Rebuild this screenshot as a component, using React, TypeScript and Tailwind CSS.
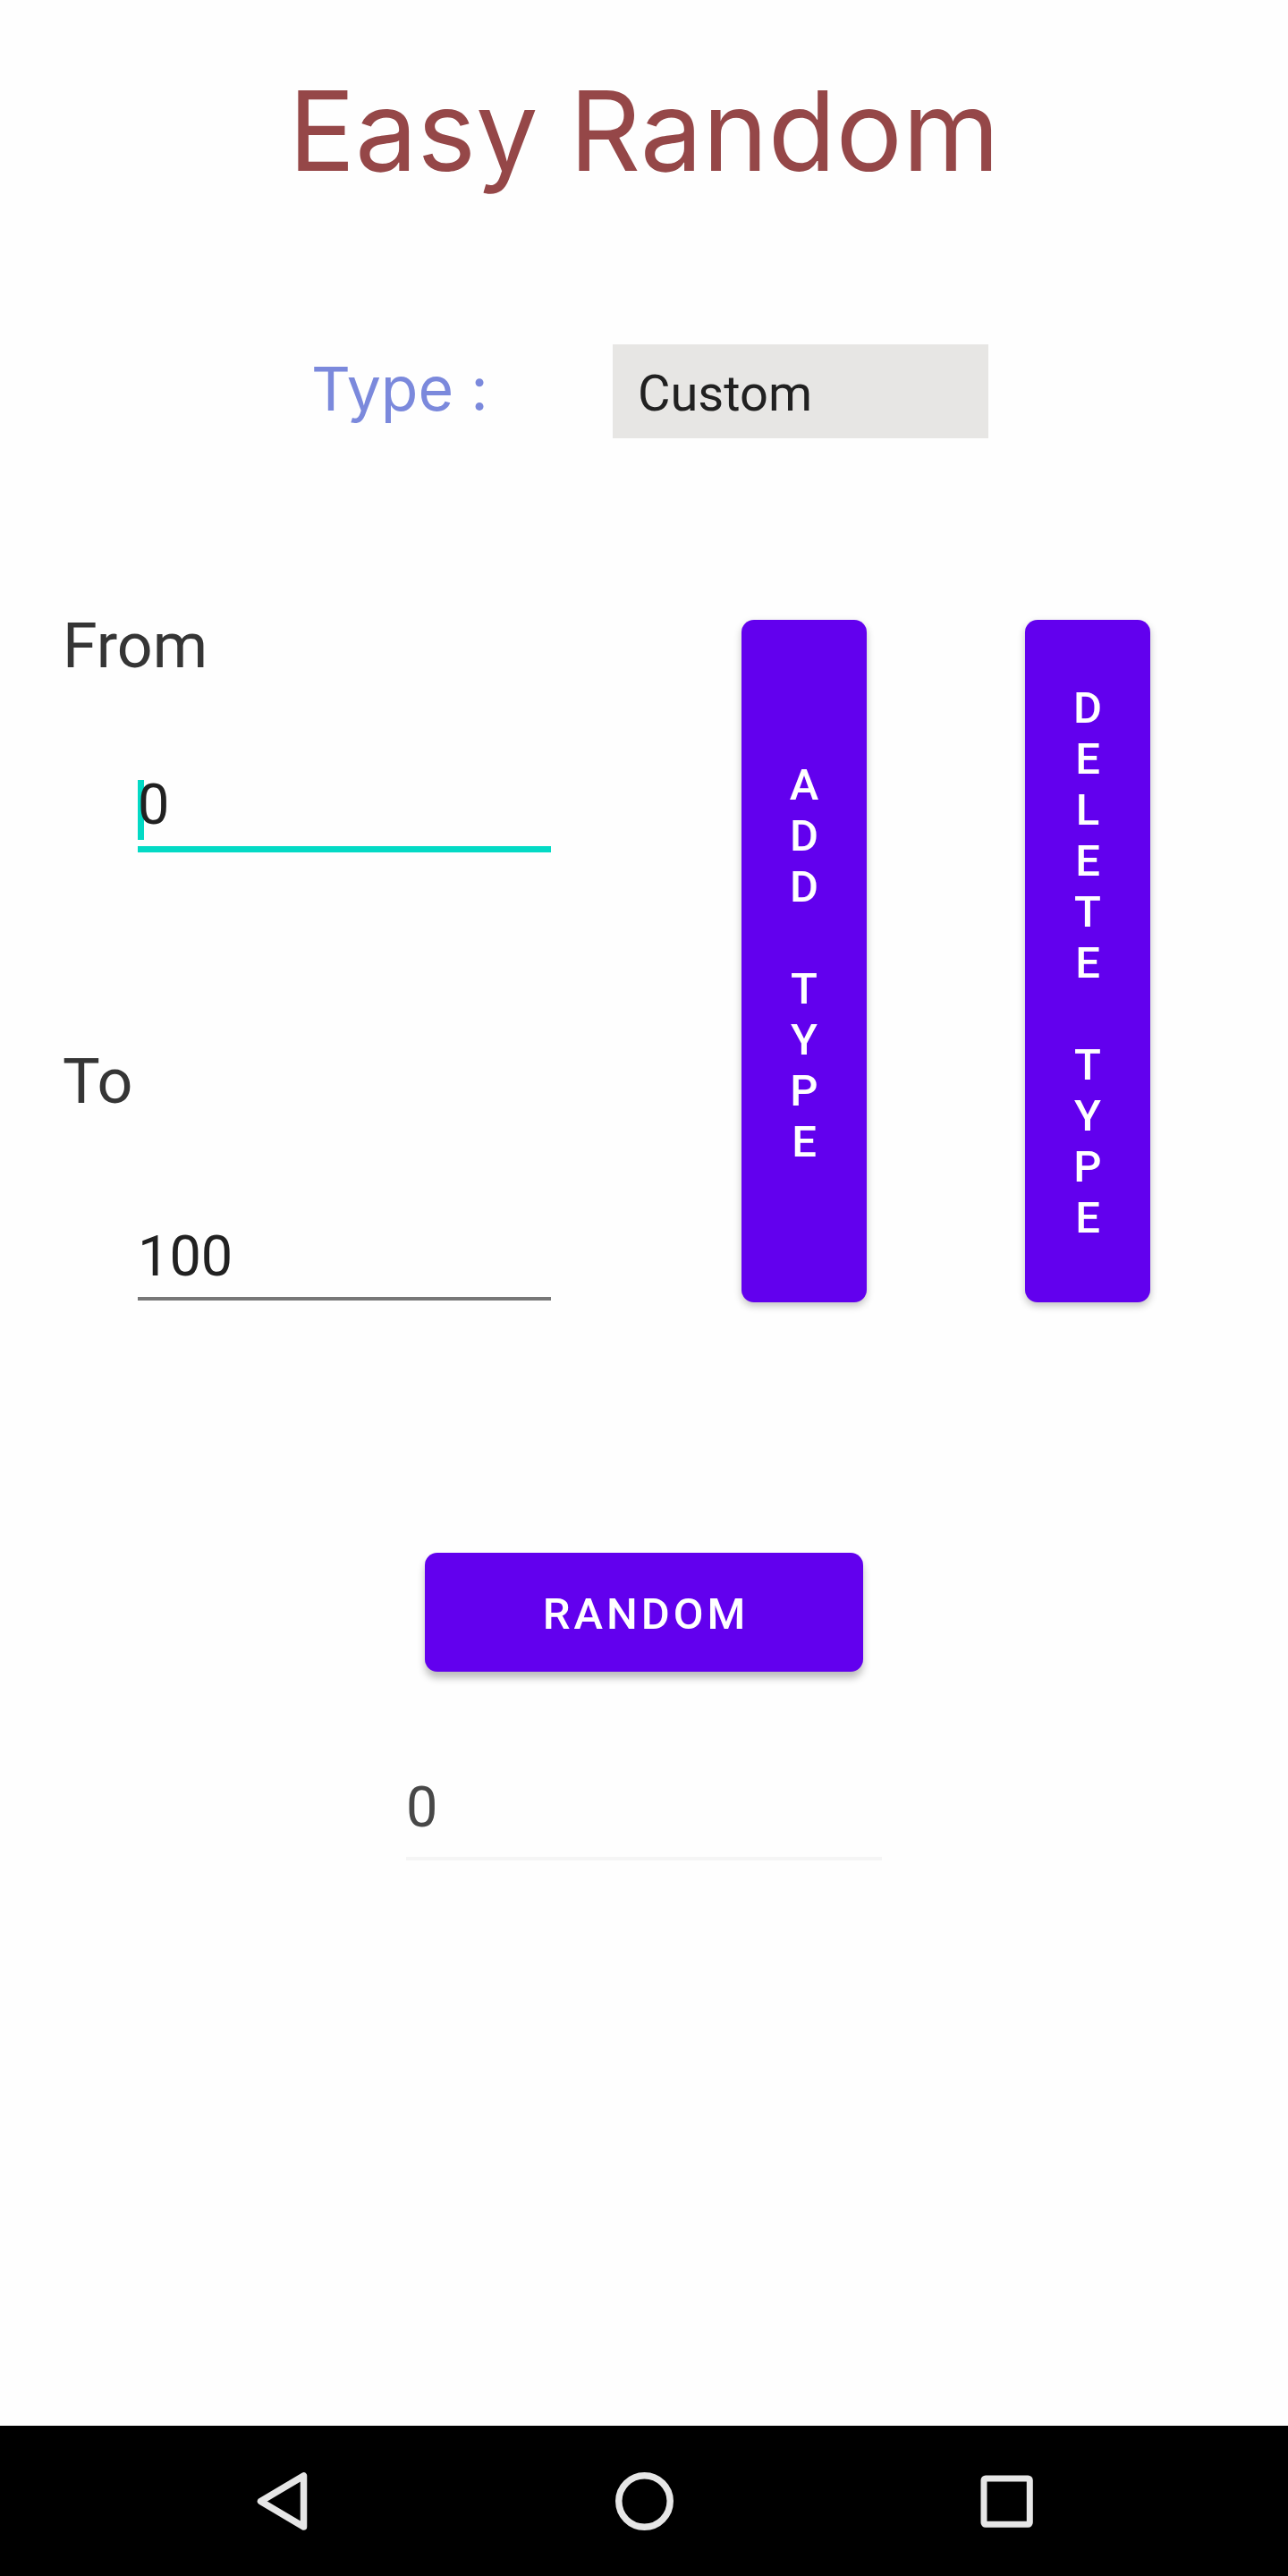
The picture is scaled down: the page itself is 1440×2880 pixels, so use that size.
import { useState } from "react";

const stackedLabel = (text: string) =>
  text.split("").map((letter, index) => (
    <span key={index} className="block h-[57px]">
      {letter}
    </span>
  ));

function StackedButton({ label }: { label: string }) {
  return (
    <button
      type="button"
      aria-label={label}
      className="flex w-[140px] flex-col items-center justify-center rounded-[14px] bg-[#6200ee] pt-1 text-[49px] leading-[57px] font-medium text-white uppercase shadow-[0_4px_8px_rgba(0,0,0,0.24)]"
    >
      {stackedLabel(label)}
    </button>
  );
}

export default function App() {
  const [from, setFrom] = useState("0");
  const [to, setTo] = useState("100");
  const [result, setResult] = useState("0");

  const roll = () => {
    const low = Number(from);
    const high = Number(to);
    setResult(String(low + Math.floor(Math.random() * (high - low + 1))));
  };

  return (
    <div className="flex min-h-screen flex-col bg-[#fefefe] font-['Roboto',sans-serif] text-[#212121]">
      <main className="flex flex-1 flex-col">
        <h1 className="mt-[74px] text-center font-['Inter',sans-serif] text-[124px] leading-[144px] text-[#954748]">
          Easy Random
        </h1>

        <div className="mt-[167px] ml-[348px] flex h-[105px] items-center">
          <label
            htmlFor="type"
            className="w-[337px] pb-2 font-['Inter',sans-serif] text-[68px] leading-[84px] text-[#7b89dc]"
          >
            Type :
          </label>
          <select
            id="type"
            className="h-full w-[420px] appearance-none bg-[#e7e6e4] px-7 pt-1 text-[56px] leading-[66px]"
          >
            <option>Custom</option>
            <option>Dice</option>
          </select>
        </div>

        <div className="mt-[203px] flex h-[763px]">
          <div className="flex flex-1 flex-col pl-[70px]">
            <label htmlFor="from" className="-mt-3 text-[70px] leading-[82px] text-[#353535]">
              From
            </label>
            <div className="relative mt-[97px] ml-[84px] w-[462px] border-b-[7px] border-[#03dac5] pb-2">
              <span className="absolute top-3 left-0 h-[67px] w-[7px] bg-[#03dac5]" />
              <input
                id="from"
                value={from}
                onChange={(event) => setFrom(event.target.value)}
                className="relative block h-[78px] w-full bg-transparent text-[63px] leading-[74px] outline-none"
              />
            </div>
            <label htmlFor="to" className="mt-[215px] text-[70px] leading-[82px] text-[#353535]">
              To
            </label>
            <input
              id="to"
              value={to}
              onChange={(event) => setTo(event.target.value)}
              className="mt-[109px] ml-[84px] block h-[95px] w-[462px] border-b-4 border-[#777777] bg-transparent text-[63px] leading-[74px] outline-none"
            />
          </div>
          <div className="flex gap-[177px] pr-[154px]">
            <StackedButton label="Add type" />
            <StackedButton label="Delete type" />
          </div>
        </div>

        <button
          type="button"
          onClick={roll}
          className="mt-[280px] h-[133px] w-[490px] self-center rounded-[14px] bg-[#6200ee] pt-1 pl-1 text-[49px] leading-[57px] font-medium tracking-[4px] text-white uppercase shadow-[0_7px_8px_rgba(0,0,0,0.26)]"
        >
          Random
        </button>

        <input
          aria-label="Result"
          readOnly
          value={result}
          className="mt-[103px] block h-[108px] w-[532px] self-center border-b-4 border-[#f5f5f5] bg-transparent pb-2 text-[63px] leading-[74px] text-[#484848] outline-none"
        />
      </main>

      <nav className="flex h-[168px] items-center justify-center gap-[295px] bg-black">
        <button type="button" aria-label="Back">
          <svg className="size-[110px]" viewBox="0 0 110 110" fill="none" stroke="#e6e6e6" strokeWidth="7.5" strokeLinejoin="round">
            <path d="M79.5 27V84L31.5 55.5Z" />
          </svg>
        </button>
        <button type="button" aria-label="Home">
          <svg className="size-[110px]" viewBox="0 0 110 110" fill="none" stroke="#e6e6e6" strokeWidth="7.5">
            <circle cx="55.5" cy="55.5" r="28.7" />
          </svg>
        </button>
        <button type="button" aria-label="Recent apps">
          <svg className="size-[110px]" viewBox="0 0 110 110" fill="none" stroke="#e6e6e6" strokeWidth="7">
            <rect x="30" y="30" width="51.3" height="51.3" rx="2" />
          </svg>
        </button>
      </nav>
    </div>
  );
}
